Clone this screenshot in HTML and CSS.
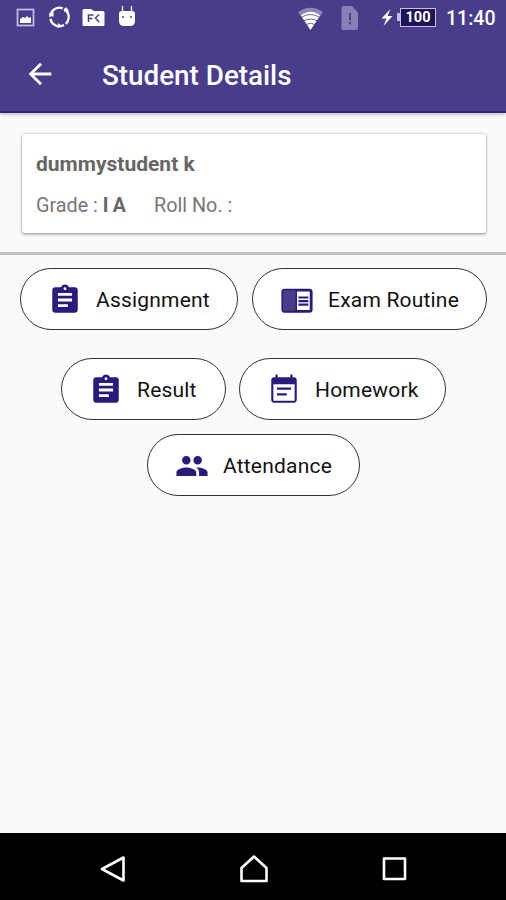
FILE: index.html
```html
<!DOCTYPE html>
<html lang="en">
<head>
<meta charset="utf-8">
<title>Student Details</title>
<link rel="stylesheet" href="styles.css">
</head>
<body>
<header class="top">
  <div class="status">
    <svg class="status-left" width="150" height="34" viewBox="0 0 150 34">
      <rect x="17.500" y="9.500" width="16" height="16" fill="none" stroke="#c6c0e2" stroke-width="1.700"/>
      <path d="M20 23v-4l3-2 2 1 2-2 2 2 2-1v6z" fill="#fff"/>
      <circle cx="59.500" cy="17" r="9.300" fill="none" stroke="#fff" stroke-width="2.300" stroke-dasharray="17.500 1.980" transform="rotate(-60 59.500 17)"/>
      <path d="M48.500 14l5-2v5zM66 7l3 4-5 1zM58 23l4 3-4 2z" fill="#fff"/>
      <path d="M84 9h7l3 2h9q1.500 0 1.500 1.500v12q0 1.500-1.500 1.500H84q-1.500 0-1.500-1.500v-14Q82.500 9 84 9z" fill="#fff"/>
      <path d="M88.500 22v-7h5M88.500 18.500h4M99 14.500l-3.500 3.500 3.500 4" fill="none" stroke="#483d8b" stroke-width="1.500"/>
      <path d="M119 13.500q0-2.500 3-2.500h10q3 0 3 2.500v7q0 5.500-5 5.500h-6q-5 0-5-5.500z" fill="#fff"/>
      <path d="M122.500 6v6M131.500 6v6" stroke="#fff" stroke-width="1.300"/>
      <circle cx="123" cy="17" r="1" fill="#483d8b"/><circle cx="131" cy="17" r="1" fill="#483d8b"/>
    </svg>
    <div class="status-right">
      <svg width="104" height="34" viewBox="0 0 104 34">
        <path d="M0 12Q12.500 3.500 25 12L12.500 30z" fill="#8d85b8"/>
        <path d="M3 15.500Q12.500 8 22 15.500L12.500 30z" fill="#fff"/>
        <path d="M3 17.500q9.500-6 19 0M5.500 21q7-4 14 0M8 24.500q4.500-2.500 9 0" fill="none" stroke="#483d8b" stroke-width=".8"/>
        <path d="M45.500 6h8.500l6 6.500V28q0 2-2 2H45.500q-2 0-2-2V8q0-2 2-2z" fill="#8780b4"/>
        <path d="M52 13v7.500M52 22v2.500" stroke="#483d8b" stroke-width="2"/>
        <path d="M92.500 9l-9 9.500h5L85.500 26l9-10h-5z" fill="#fff"/>
      </svg>
      <div class="battery">100</div>
      <div class="clock">11:40</div>
    </div>
  </div>
  <div class="bar">
    <svg class="back" width="34" height="34" viewBox="0 0 24 24"><path fill="#fff" d="M20 11H7.830l5.590-5.590L12 4l-8 8 8 8 1.410-1.410L7.830 13H20v-2z"/></svg>
    <h1>Student Details</h1>
  </div>
</header>
<main>
  <section class="card">
    <div class="name">dummystudent k</div>
    <div class="meta"><span class="grade">Grade : <b>I A</b></span><span class="roll">Roll No. :</span></div>
  </section>
  <div class="rule"></div>
  <nav class="actions">
    <div class="row">
      <a class="pill assignment"><svg viewBox="0 0 24 24"><path d="M19 3h-4.180C14.400 1.840 13.300 1 12 1c-1.300 0-2.400.84-2.820 2H5c-1.100 0-2 .9-2 2v14c0 1.100.9 2 2 2h14c1.100 0 2-.9 2-2V5c0-1.100-.9-2-2-2zm-7 0c.55 0 1 .45 1 1s-.45 1-1 1-1-.45-1-1 .45-1 1-1zm2 14H7v-2h7v2zm3-4H7v-2h10v2zm0-4H7V7h10v2z"/></svg><span>Assignment</span></a>
      <a class="pill exam"><svg viewBox="0 0 24 24"><path d="M13 12h7v1.500h-7zm0-2.500h7V11h-7zm0 5h7V16h-7zM21 4H3c-1.100 0-2 .9-2 2v13c0 1.100.9 2 2 2h18c1.100 0 2-.9 2-2V6c0-1.100-.9-2-2-2zm0 15h-9V6h9v13z"/><path class="page" d="M2.200 5.200h8.800v14.500H2.200z"/></svg><span>Exam Routine</span></a>
    </div>
    <div class="row second">
      <a class="pill result"><svg viewBox="0 0 24 24"><path d="M19 3h-4.180C14.400 1.840 13.300 1 12 1c-1.300 0-2.400.84-2.820 2H5c-1.100 0-2 .9-2 2v14c0 1.100.9 2 2 2h14c1.100 0 2-.9 2-2V5c0-1.100-.9-2-2-2zm-7 0c.55 0 1 .45 1 1s-.45 1-1 1-1-.45-1-1 .45-1 1-1zm2 14H7v-2h7v2zm3-4H7v-2h10v2zm0-4H7V7h10v2z"/></svg><span>Result</span></a>
      <a class="pill homework"><svg viewBox="0 0 24 24"><path d="M17 10.300H7v1.500h10v-1.500zm2-7.300h-1V1h-1.500v2H7.500V1H6v2H5c-1.110 0-1.990.9-1.990 2L3 19c0 1.100.89 2 2 2h14c1.100 0 2-.9 2-2V5c0-1.100-.9-2-2-2zm.5 16.500H4.500V8h15v11.500zM14 14.300H7v1.500h7v-1.500z"/></svg><span>Homework</span></a>
    </div>
    <div class="row third">
      <a class="pill attendance"><svg viewBox="0 0 24 24"><path d="M16 11c1.660 0 2.990-1.340 2.990-3S17.660 5 16 5c-1.660 0-3 1.340-3 3s1.340 3 3 3zm-8 0c1.660 0 2.990-1.340 2.990-3S9.660 5 8 5C6.340 5 5 6.340 5 8s1.340 3 3 3zm0 2c-2.330 0-7 1.170-7 3.500V19h14v-2.500c0-2.330-4.670-3.500-7-3.500zm8 0c-.29 0-.62.02-.97.05 1.160.84 1.970 1.970 1.970 3.450V19h6v-2.500c0-2.330-4.670-3.500-7-3.500z"/></svg><span>Attendance</span></a>
    </div>
  </nav>
</main>
<footer class="navbar">
  <svg viewBox="0 0 28 30"><path d="M24.500 3.500v23L3 15z"/></svg>
  <svg viewBox="0 0 28 30"><path d="M14 2.500L1.500 14v13h25V14z"/></svg>
  <svg viewBox="0 0 28 30"><rect x="3" y="4.500" width="21" height="20.500"/></svg>
</footer>
</body>
</html>
```
FILE: styles.css
```css
* { box-sizing: border-box; }
body {
  margin: 0;
  height: 900px;
  display: flex;
  flex-direction: column;
  overflow: hidden;
  background: #fafafa;
  font-family: Roboto, "Liberation Sans", sans-serif;
}
svg { display: block; flex: none; }
.top {
  flex: none;
  height: 113px;
  background: #483d8b;
  border-bottom: 2px solid #34277b;
  box-shadow: 0 1px 4px rgba(0, 0, 0, .3);
  color: #fff;
}
.status { height: 34px; display: flex; justify-content: space-between; }
.status-right { display: flex; align-items: center; padding-right: 10px; }
.battery {
  position: relative;
  width: 36px;
  height: 19px;
  margin-left: -2px;
  border: 1.500px solid #c6c0e2;
  background: #1d1557;
  font-size: 14.500px;
  font-weight: 700;
  line-height: 17px;
  text-align: center;
}
.battery::before {
  content: "";
  position: absolute;
  left: -4px;
  top: 4px;
  width: 3px;
  height: 8px;
  background: #c6c0e2;
}
.clock { width: 50px; margin-left: 10px; font-size: 19.500px; font-weight: 500; line-height: 34px; padding-top: 3px; white-space: nowrap; }
.bar { height: 78px; display: flex; align-items: center; padding: 1px 0 0 23px; }
h1 { margin: 5px 0 0 45px; font-size: 27.800px; font-weight: 500; line-height: 32px; white-space: nowrap; }
main { flex: 1; }
.card {
  height: 99px;
  margin: 21px 20px 0 22px;
  padding: 16px 14px;
  border-radius: 2px;
  background: #fff;
  box-shadow: 0 0 2px rgba(0, 0, 0, .4), 0 2px 3px rgba(0, 0, 0, .24);
  color: #666;
}
.name { font-size: 21px; font-weight: 700; line-height: 28px; }
.meta { display: flex; margin-top: 14px; font-size: 19.800px; line-height: 28px; color: #777; white-space: nowrap; }
.meta b { color: #666; font-size: 19.500px; letter-spacing: -.3px; }
.grade { width: 118px; }
.rule { height: 3px; margin-top: 19px; background: #c1c1c1; }
.actions { padding-top: 13px; }
.row { display: flex; gap: 14px; padding-left: 20px; }
.second { gap: 13px; padding-left: 61px; margin-top: 28px; }
.third { padding-left: 147px; margin-top: 14px; }
.pill {
  height: 62px;
  display: flex;
  align-items: center;
  padding: 1px 0 0 27px;
  border: 1.500px solid #333;
  border-radius: 31px;
  background: #fff;
  color: #111;
  font-size: 21px;
  line-height: 28px;
  letter-spacing: .2px;
  white-space: nowrap;
}
.pill svg { width: 34px; height: 34px; margin-right: 14px; fill: #2a1a80; }
.pill .page { fill: #483d8b; }
.assignment { width: 218px; }
.exam { width: 235px; }
.result { width: 165px; }
.homework { width: 207px; }
.attendance { width: 213px; }
.navbar {
  flex: none;
  height: 67px;
  display: flex;
  justify-content: center;
  gap: 113px;
  padding: 21px 0 0 2px;
  background: #000;
}
.navbar svg { width: 28px; height: 30px; fill: none; stroke: #fff; stroke-width: 2.600; stroke-linejoin: round; }
```
